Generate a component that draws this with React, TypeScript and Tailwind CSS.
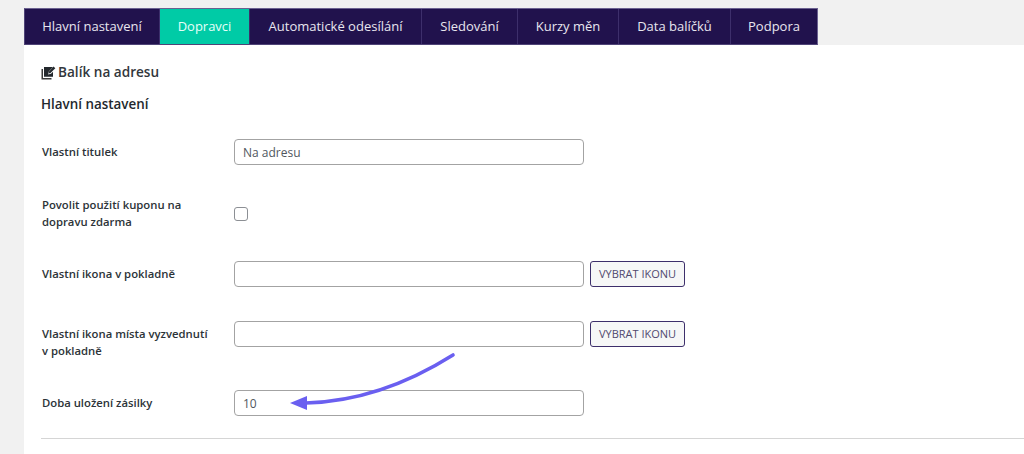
const tabs = [
  { label: 'Hlavní nastavení', width: 'w-[135px]' },
  { label: 'Dopravci', width: 'w-[90px]', active: true },
  { label: 'Automatické odesílání', width: 'w-[172px]' },
  { label: 'Sledování', width: 'w-[96px]' },
  { label: 'Kurzy měn', width: 'w-[101px]' },
  { label: 'Data balíčků', width: 'w-[112px]' },
  { label: 'Podpora', width: 'w-[86px]' },
]

function TextInput({ value = '' }: { value?: string }) {
  return (
    <input
      readOnly
      value={value}
      className="h-[26px] w-[350px] shrink-0 rounded-[4px] border border-[#a3a3a3] bg-white px-2 text-[12px] text-[#50575e] outline-none"
    />
  )
}

function IconButton() {
  return (
    <button className="ml-[6px] h-[26px] w-[95px] rounded-[3px] border border-[#3d2f6b] bg-[#f6f7f7] text-[11px] text-[#50496f]">
      VYBRAT IKONU
    </button>
  )
}

function BoxIcon() {
  return (
    <svg width="15" height="14" viewBox="0 0 15 14" className="-ml-px shrink-0">
      <path d="M0.5 3h1.5v9h8.5v1.6H0.5z" fill="#3a3a3a" />
      <path d="M3 1h9l-4.2 4.6-0.7 2.9 2.9-0.8L12 5.8V10.8H3z" fill="#23282d" />
      <path d="M12.6 0.6l1.7 1.6-4.8 4.7-2 0.5 0.5-2z" fill="#23282d" />
    </svg>
  )
}

function App() {
  return (
    <div className="h-[454px] w-[1024px] overflow-hidden bg-[#f1f1f1] pt-2 pl-6 font-['Open_Sans','Noto_Sans',sans-serif] text-[#2c3338]">
      <nav className="flex h-[37px] w-[794px] border border-[#4f4477] border-t-[#6b6190] border-r-[#6b6190] bg-[#21124d]">
        {tabs.map((tab) => (
          <div
            key={tab.label}
            className={`flex items-center justify-center border-r border-[#3d2f6b] text-[13px] last:border-r-0 ${tab.width} ${
              tab.active ? 'bg-[#00cba6] text-[#e6fff9]' : 'text-[#e8e6ef]'
            }`}
          >
            {tab.label}
          </div>
        ))}
      </nav>

      <main className="relative h-[409px] bg-white pt-[18px] pl-[18px]">
        <h2 className="flex h-[19px] items-center gap-[2px] text-[13.6px] font-semibold text-[#32373c]">
          <BoxIcon />
          Balík na adresu
        </h2>
        <h3 className="mt-3 -ml-px h-5 text-[13.4px] leading-5 font-semibold text-[#23282d]">Hlavní nastavení</h3>

        <div className="mt-[25px] flex h-[26px] items-center">
          <label className="w-[192px] text-[11.3px] font-semibold">Vlastní titulek</label>
          <TextInput value="Na adresu" />
        </div>

        <div className="mt-8 flex h-[34px] items-center">
          <label className="w-[192px] pr-6 pb-[2px] text-[11.3px] leading-[17px] font-semibold">
            Povolit použití kuponu na dopravu zdarma
          </label>
          <span className="h-[14px] w-[14px] rounded-[3px] border border-[#8c8f94] bg-white" />
        </div>

        <div className="mt-[30px] flex h-[26px] items-center">
          <label className="w-[192px] text-[11.3px] font-semibold">Vlastní ikona v pokladně</label>
          <TextInput />
          <IconButton />
        </div>

        <div className="mt-[34px] flex h-[26px] items-start">
          <label className="w-[192px] pt-[5px] pr-5 text-[11.3px] leading-[16.5px] font-semibold">
            Vlastní ikona místa vyzvednutí v pokladně
          </label>
          <TextInput />
          <IconButton />
        </div>

        <div className="mt-[43px] flex h-[26px] items-center">
          <label className="w-[192px] text-[11.3px] font-semibold">Doba uložení zásilky</label>
          <TextInput value="10" />
        </div>

        <hr className="mt-[22px] -ml-px border-[#d5d5d5]" />

        <svg className="absolute top-[305px] left-[262px]" width="176" height="62" viewBox="0 0 176 62" fill="none">
          <path d="M167 5Q94 51 20 53" stroke="#6a5ff0" strokeWidth="3.6" strokeLinecap="round" />
          <path d="M4 53L21 46V60z" fill="#6a5ff0" />
        </svg>
      </main>
    </div>
  )
}

export default App
